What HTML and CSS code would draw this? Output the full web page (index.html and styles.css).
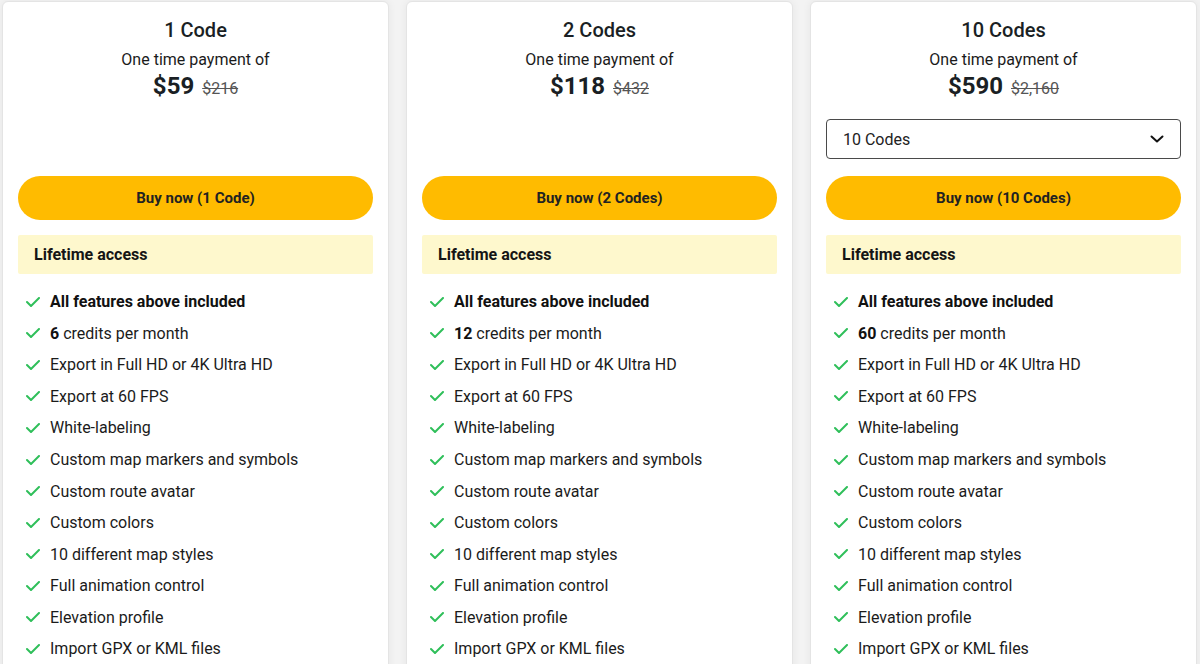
FILE: index.html
```html
<!DOCTYPE html>
<html lang="en">
<head>
<meta charset="utf-8">
<title>Pricing</title>
<link rel="stylesheet" href="styles.css">
</head>
<body>
<div class="pricing">
  <div class="card">
    <h2 class="title">1 Code</h2>
    <p class="sub">One time payment of</p>
    <p class="price"><span class="now">$59</span><s class="was">$216</s></p>
    <div class="slot"></div>
    <button class="buy">Buy now (1 Code)</button>
    <div class="access">Lifetime access</div>
    <ul class="features">
      <li><svg class="chk" viewBox="0 0 14 10"><polyline points="1,5 5,9 13,1"/></svg><b>All features above included</b></li>
      <li><svg class="chk" viewBox="0 0 14 10"><polyline points="1,5 5,9 13,1"/></svg><span><b>6</b> credits per month</span></li>
      <li><svg class="chk" viewBox="0 0 14 10"><polyline points="1,5 5,9 13,1"/></svg>Export in Full HD or 4K Ultra HD</li>
      <li><svg class="chk" viewBox="0 0 14 10"><polyline points="1,5 5,9 13,1"/></svg>Export at 60 FPS</li>
      <li><svg class="chk" viewBox="0 0 14 10"><polyline points="1,5 5,9 13,1"/></svg>White-labeling</li>
      <li><svg class="chk" viewBox="0 0 14 10"><polyline points="1,5 5,9 13,1"/></svg>Custom map markers and symbols</li>
      <li><svg class="chk" viewBox="0 0 14 10"><polyline points="1,5 5,9 13,1"/></svg>Custom route avatar</li>
      <li><svg class="chk" viewBox="0 0 14 10"><polyline points="1,5 5,9 13,1"/></svg>Custom colors</li>
      <li><svg class="chk" viewBox="0 0 14 10"><polyline points="1,5 5,9 13,1"/></svg>10 different map styles</li>
      <li><svg class="chk" viewBox="0 0 14 10"><polyline points="1,5 5,9 13,1"/></svg>Full animation control</li>
      <li><svg class="chk" viewBox="0 0 14 10"><polyline points="1,5 5,9 13,1"/></svg>Elevation profile</li>
      <li><svg class="chk" viewBox="0 0 14 10"><polyline points="1,5 5,9 13,1"/></svg>Import GPX or KML files</li>
    </ul>
  </div>
  <div class="card">
    <h2 class="title">2 Codes</h2>
    <p class="sub">One time payment of</p>
    <p class="price"><span class="now">$118</span><s class="was">$432</s></p>
    <div class="slot"></div>
    <button class="buy">Buy now (2 Codes)</button>
    <div class="access">Lifetime access</div>
    <ul class="features">
      <li><svg class="chk" viewBox="0 0 14 10"><polyline points="1,5 5,9 13,1"/></svg><b>All features above included</b></li>
      <li><svg class="chk" viewBox="0 0 14 10"><polyline points="1,5 5,9 13,1"/></svg><span><b>12</b> credits per month</span></li>
      <li><svg class="chk" viewBox="0 0 14 10"><polyline points="1,5 5,9 13,1"/></svg>Export in Full HD or 4K Ultra HD</li>
      <li><svg class="chk" viewBox="0 0 14 10"><polyline points="1,5 5,9 13,1"/></svg>Export at 60 FPS</li>
      <li><svg class="chk" viewBox="0 0 14 10"><polyline points="1,5 5,9 13,1"/></svg>White-labeling</li>
      <li><svg class="chk" viewBox="0 0 14 10"><polyline points="1,5 5,9 13,1"/></svg>Custom map markers and symbols</li>
      <li><svg class="chk" viewBox="0 0 14 10"><polyline points="1,5 5,9 13,1"/></svg>Custom route avatar</li>
      <li><svg class="chk" viewBox="0 0 14 10"><polyline points="1,5 5,9 13,1"/></svg>Custom colors</li>
      <li><svg class="chk" viewBox="0 0 14 10"><polyline points="1,5 5,9 13,1"/></svg>10 different map styles</li>
      <li><svg class="chk" viewBox="0 0 14 10"><polyline points="1,5 5,9 13,1"/></svg>Full animation control</li>
      <li><svg class="chk" viewBox="0 0 14 10"><polyline points="1,5 5,9 13,1"/></svg>Elevation profile</li>
      <li><svg class="chk" viewBox="0 0 14 10"><polyline points="1,5 5,9 13,1"/></svg>Import GPX or KML files</li>
    </ul>
  </div>
  <div class="card">
    <h2 class="title">10 Codes</h2>
    <p class="sub">One time payment of</p>
    <p class="price"><span class="now">$590</span><s class="was">$2,160</s></p>
    <div class="slot">
      <div class="select"><span>10 Codes</span><svg class="chev" viewBox="0 0 14 8"><polyline points="1.5,1.5 7,6.5 12.5,1.5"/></svg></div>
    </div>
    <button class="buy">Buy now (10 Codes)</button>
    <div class="access">Lifetime access</div>
    <ul class="features">
      <li><svg class="chk" viewBox="0 0 14 10"><polyline points="1,5 5,9 13,1"/></svg><b>All features above included</b></li>
      <li><svg class="chk" viewBox="0 0 14 10"><polyline points="1,5 5,9 13,1"/></svg><span><b>60</b> credits per month</span></li>
      <li><svg class="chk" viewBox="0 0 14 10"><polyline points="1,5 5,9 13,1"/></svg>Export in Full HD or 4K Ultra HD</li>
      <li><svg class="chk" viewBox="0 0 14 10"><polyline points="1,5 5,9 13,1"/></svg>Export at 60 FPS</li>
      <li><svg class="chk" viewBox="0 0 14 10"><polyline points="1,5 5,9 13,1"/></svg>White-labeling</li>
      <li><svg class="chk" viewBox="0 0 14 10"><polyline points="1,5 5,9 13,1"/></svg>Custom map markers and symbols</li>
      <li><svg class="chk" viewBox="0 0 14 10"><polyline points="1,5 5,9 13,1"/></svg>Custom route avatar</li>
      <li><svg class="chk" viewBox="0 0 14 10"><polyline points="1,5 5,9 13,1"/></svg>Custom colors</li>
      <li><svg class="chk" viewBox="0 0 14 10"><polyline points="1,5 5,9 13,1"/></svg>10 different map styles</li>
      <li><svg class="chk" viewBox="0 0 14 10"><polyline points="1,5 5,9 13,1"/></svg>Full animation control</li>
      <li><svg class="chk" viewBox="0 0 14 10"><polyline points="1,5 5,9 13,1"/></svg>Elevation profile</li>
      <li><svg class="chk" viewBox="0 0 14 10"><polyline points="1,5 5,9 13,1"/></svg>Import GPX or KML files</li>
    </ul>
  </div>
</div>
</body>
</html>
```
FILE: styles.css
```css
* { box-sizing: border-box; }
html, body { margin: 0; padding: 0; }
body {
  background: #f3f3f3;
  font-family: Roboto, "Liberation Sans", Arial, sans-serif;
  color: #1b1b1b;
  height: 664px;
  overflow: hidden;
}
.pricing {
  display: flex;
  gap: 17px;
  padding: 1px 2px 0;
}
.card {
  width: 387px;
  flex: none;
  background: #fff;
  border: 1px solid #e4e4e4;
  border-radius: 6px;
  box-shadow: 0 0 8px rgba(0, 0, 0, 0.06);
  padding: 14px 15px 40px;
  display: flex;
  flex-direction: column;
}
.title {
  margin: 0;
  text-align: center;
  font-size: 20px;
  font-weight: 500;
  line-height: 28px;
  color: #1a1f24;
}
.sub {
  margin: 4px 0 0;
  text-align: center;
  font-size: 16px;
  line-height: 24px;
}
.price {
  margin: 0;
  display: flex;
  justify-content: center;
  align-items: baseline;
  gap: 8px;
  line-height: 28px;
}
.now {
  font-size: 24px;
  font-weight: 700;
  color: #1a1f24;
}
.was {
  font-size: 16px;
  color: #555;
}
.slot {
  margin-top: 16px;
  height: 40px;
}
.select {
  height: 40px;
  border: 1px solid #4a4a4a;
  border-radius: 4px;
  display: flex;
  align-items: center;
  justify-content: space-between;
  padding: 0 16px;
  font-size: 16px;
  color: #222;
}
.chev {
  width: 14px;
  height: 8px;
  fill: none;
  stroke: #111;
  stroke-width: 2;
  stroke-linecap: round;
  stroke-linejoin: round;
}
.buy {
  margin-top: 17px;
  height: 44px;
  width: 100%;
  border: none;
  border-radius: 22px;
  background: #ffbb00;
  font-family: inherit;
  font-size: 15px;
  font-weight: 700;
  color: #222;
  cursor: pointer;
}
.access {
  margin-top: 15px;
  height: 39px;
  background: #fef8cd;
  border-radius: 2px;
  display: flex;
  align-items: center;
  padding-left: 16px;
  font-size: 16px;
  font-weight: 700;
  color: #151515;
}
.features {
  list-style: none;
  margin: 12px 0 0;
  padding: 0 0 0 8px;
}
.features li {
  display: flex;
  align-items: center;
  gap: 10px;
  height: 31.55px;
  font-size: 16px;
  color: #1b1b1b;
}
.features b { font-weight: 700; color: #111; }
.chk {
  width: 14px;
  height: 10px;
  flex: none;
  fill: none;
  stroke: #2fbf5a;
  stroke-width: 2;
  stroke-linecap: round;
  stroke-linejoin: round;
}
```
